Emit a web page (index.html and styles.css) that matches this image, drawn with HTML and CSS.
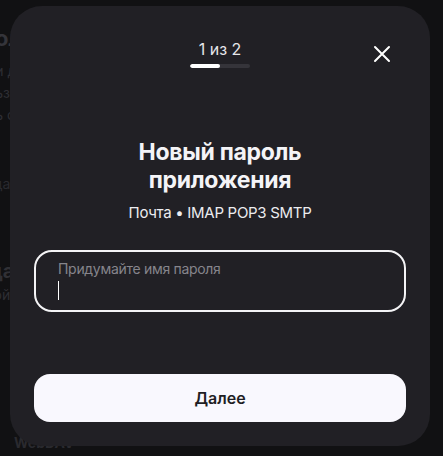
FILE: index.html
```html
<!DOCTYPE html>
<html lang="ru">
<head>
<meta charset="utf-8">
<title>Новый пароль приложения</title>
<link rel="stylesheet" href="styles.css">
</head>
<body>
<div class="page">
  <div class="page-title">Пароли</div>
  <div class="page-text">Пароли для приложений нужны</div>
  <div class="page-text">Используйте их в программах</div>
  <div class="page-text">Пароль создаётся отдельно</div>
  <div class="page-sub page-sub-first">Почта</div>
  <div class="page-sub">Календарь</div>
  <div class="page-head2">Создать</div>
  <div class="page-text">Настройки</div>
  <div class="page-foot">WebDAV</div>
</div>
<div class="modal" role="dialog">
  <button class="close" aria-label="Закрыть">
    <svg width="18" height="18" viewBox="0 0 18 18"><path d="M2 2 L16 16 M16 2 L2 16" stroke="#ffffff" stroke-width="2" stroke-linecap="round" fill="none"/></svg>
  </button>
  <div class="step">
    <div class="step-label">1 из 2</div>
    <div class="progress"><div class="progress-fill"></div></div>
  </div>
  <h1 class="title">Новый пароль<br>приложения</h1>
  <div class="subtitle">Почта • IMAP POP3 SMTP</div>
  <div class="field">
    <div class="field-label">Придумайте имя пароля</div>
    <div class="caret"></div>
  </div>
  <button class="next">Далее</button>
</div>
</body>
</html>
```
FILE: styles.css
```css
html, body {
  margin: 0;
  padding: 0;
}
body {
  width: 443px;
  height: 456px;
  background: #111113;
  font-family: Inter, "Noto Sans", "Liberation Sans", sans-serif;
  overflow: hidden;
  position: relative;
}
.page {
  margin-left: -48px;
  padding-top: 24px;
  color: #2e2e33;
  font-size: 14px;
  line-height: 20px;
}
.page-title {
  font-size: 22px;
  font-weight: 700;
  line-height: 28px;
  color: #34343a;
  margin-bottom: 8px;
}
.page-text {
  line-height: 22px;
}
.page-sub {
  line-height: 20px;
  color: #2a2a2f;
}
.page-sub-first {
  margin-top: 28px;
}
.page-head2 {
  margin-top: 64px;
  font-size: 20px;
  font-weight: 700;
  line-height: 26px;
  color: #303035;
}
.page-foot {
  margin-top: 127px;
  margin-left: 62px;
  font-size: 14px;
  font-weight: 700;
  color: #2a2a2f;
}
.modal {
  position: absolute;
  left: 10px;
  top: 6px;
  width: 420px;
  height: 440px;
  box-sizing: border-box;
  background: #212025;
  border-radius: 32px;
  padding: 33px 24px 24px;
  display: flex;
  flex-direction: column;
  align-items: stretch;
  color: #f2f2f5;
}
.close {
  position: absolute;
  left: 363px;
  top: 39px;
  width: 18px;
  height: 18px;
  padding: 0;
  border: 0;
  background: none;
  display: flex;
}
.step {
  display: flex;
  flex-direction: column;
  align-items: center;
}
.step-label {
  font-size: 16px;
  line-height: 20px;
  color: #e6e6ea;
}
.progress {
  margin-top: 5px;
  width: 60px;
  height: 4px;
  border-radius: 2px;
  background: #35343a;
  overflow: hidden;
}
.progress-fill {
  width: 30px;
  height: 100%;
  border-radius: 2px;
  background: #ffffff;
}
.title {
  margin: 70px 0 0;
  font-size: 23px;
  line-height: 28px;
  font-weight: 700;
  letter-spacing: -0.3px;
  text-align: center;
  color: #f4f4f7;
}
.subtitle {
  margin-top: 9px;
  font-size: 15px;
  line-height: 20px;
  letter-spacing: -0.3px;
  text-align: center;
  color: #ececef;
}
.field {
  margin-top: 27px;
  height: 62px;
  box-sizing: border-box;
  border: 2px solid #f4f4f6;
  border-radius: 18px;
  padding: 8px 22px 0;
}
.field-label {
  font-size: 14px;
  line-height: 18px;
  letter-spacing: -0.3px;
  color: #86858c;
}
.caret {
  margin-top: 3px;
  width: 1px;
  height: 19px;
  background: #ffffff;
}
.next {
  margin-top: 62px;
  height: 48px;
  border: 0;
  border-radius: 16px;
  background: #f9f8fe;
  color: #1f1e24;
  font-family: inherit;
  font-size: 16px;
  font-weight: 600;
}
```
